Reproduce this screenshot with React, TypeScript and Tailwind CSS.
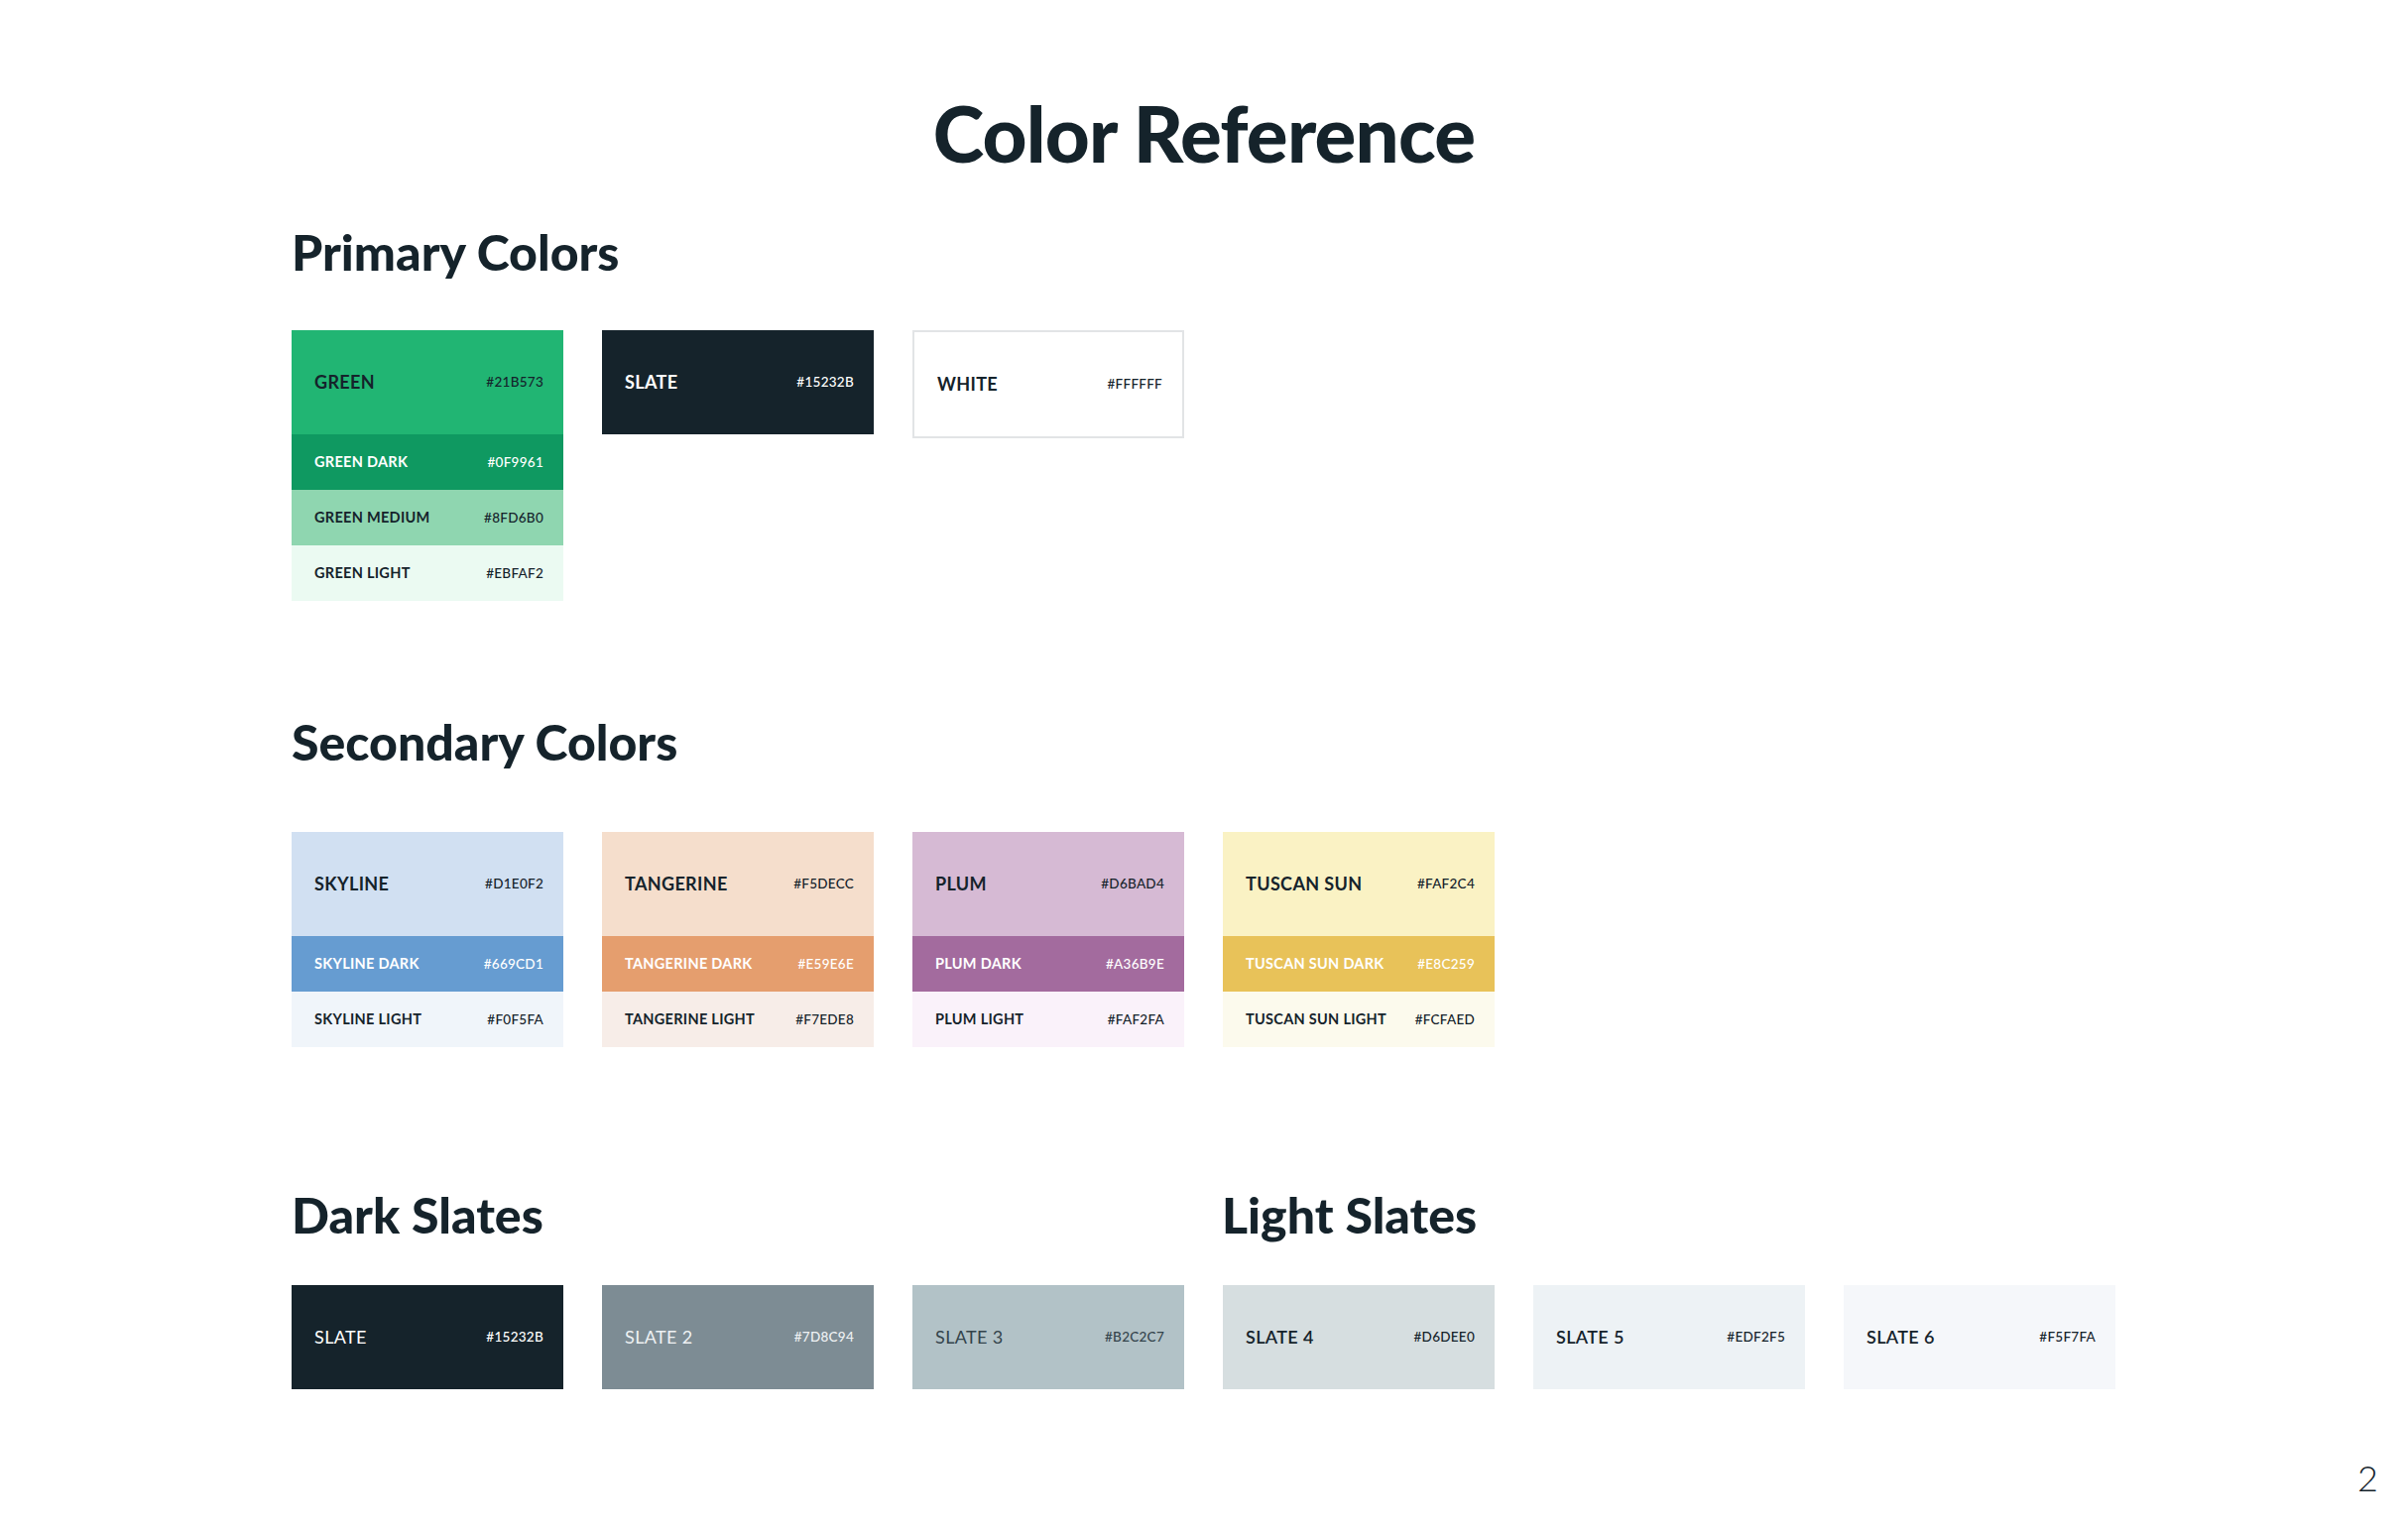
import React from "react";

const F = { fontFamily: "Lato, 'Noto Sans', sans-serif" };

type Row = { name: string; hex: string; bg: string; fg: string; h: "main" | "sub"; weight?: string };

function Swatch({ rows, border }: { rows: Row[]; border?: boolean }) {
  return (
    <div className={`w-[274px] flex flex-col ${border ? "border-2 border-[#e2e4e6]" : ""}`}>
      {rows.map((r) => (
        <div
          key={r.name}
          className={`flex items-center justify-between pl-[23px] pr-[20px] ${r.h === "main" ? "h-[105px]" : "h-[56px]"}`}
          style={{ background: r.bg, color: r.fg }}
        >
          <span className={`${r.h === "main" ? "text-[18px]" : "text-[14.5px]"} ${r.weight ?? "font-bold"} tracking-[0.02em]`}>{r.name}</span>
          <span className="text-[13.5px] font-medium tracking-[0.02em]">{r.hex}</span>
        </div>
      ))}
    </div>
  );
}

const D = "#15232B";
const W = "#ffffff";

const m = (name: string, hex: string, bg: string, fg = D, weight?: string): Row => ({ name, hex, bg, fg, h: "main", weight });
const s = (name: string, hex: string, bg: string, fg = D): Row => ({ name, hex, bg, fg, h: "sub" });

export default function App() {
  return (
    <div className="relative w-[2428px] h-[1546px] bg-white text-[#15232B] overflow-hidden" style={F}>
      <div className="pt-[95px] text-center text-[78px] font-black leading-none tracking-[-0.01em]">Color Reference</div>
      <div className="pl-[294px] flex flex-col">
        <h2 className="mt-[56px] text-[50px] font-black leading-none">Primary Colors</h2>
        <div className="mt-[54px] flex gap-[39px] items-start">
          <Swatch
            rows={[
              m("GREEN", "#21B573", "#21B573"),
              s("GREEN DARK", "#0F9961", "#0F9961", W),
              s("GREEN MEDIUM", "#8FD6B0", "#8FD6B0"),
              s("GREEN LIGHT", "#EBFAF2", "#EBFAF2"),
            ]}
          />
          <Swatch rows={[m("SLATE", "#15232B", "#15232B", W)]} />
          <Swatch border rows={[{ ...m("WHITE", "#FFFFFF", "#FFFFFF"), h: "main" }]} />
        </div>
        <h2 className="mt-[117px] text-[50px] font-black leading-none">Secondary Colors</h2>
        <div className="mt-[66px] flex gap-[39px] items-start">
          <Swatch rows={[m("SKYLINE", "#D1E0F2", "#D1E0F2"), s("SKYLINE DARK", "#669CD1", "#669CD1", W), s("SKYLINE LIGHT", "#F0F5FA", "#F0F5FA")]} />
          <Swatch rows={[m("TANGERINE", "#F5DECC", "#F5DECC"), s("TANGERINE DARK", "#E59E6E", "#E59E6E", W), s("TANGERINE LIGHT", "#F7EDE8", "#F7EDE8")]} />
          <Swatch rows={[m("PLUM", "#D6BAD4", "#D6BAD4"), s("PLUM DARK", "#A36B9E", "#A36B9E", W), s("PLUM LIGHT", "#FAF2FA", "#FAF2FA")]} />
          <Swatch rows={[m("TUSCAN SUN", "#FAF2C4", "#FAF2C4"), s("TUSCAN SUN DARK", "#E8C259", "#E8C259", W), s("TUSCAN SUN LIGHT", "#FCFAED", "#FCFAED")]} />
        </div>
        <div className="mt-[144px] flex gap-[39px]">
          <h2 className="w-[899px] text-[50px] font-black leading-none">Dark Slates</h2>
          <h2 className="text-[50px] font-black leading-none">Light Slates</h2>
        </div>
        <div className="mt-[46px] flex gap-[39px] items-start">
          <Swatch rows={[m("SLATE", "#15232B", "#15232B", W, "font-normal")]} />
          <Swatch rows={[m("SLATE 2", "#7D8C94", "#7D8C94", "#eef1f3", "font-normal")]} />
          <Swatch rows={[m("SLATE 3", "#B2C2C7", "#B2C2C7", "#34444c", "font-normal")]} />
          <Swatch rows={[m("SLATE 4", "#D6DEE0", "#D6DEE0", D, "font-semibold")]} />
          <Swatch rows={[m("SLATE 5", "#EDF2F5", "#EDF2F5", D, "font-semibold")]} />
          <Swatch rows={[m("SLATE 6", "#F5F7FA", "#F5F7FA", D, "font-semibold")]} />
        </div>
      </div>
      <div className="absolute right-[30px] bottom-[38px] text-[36px] font-light leading-none">2</div>
    </div>
  );
}
